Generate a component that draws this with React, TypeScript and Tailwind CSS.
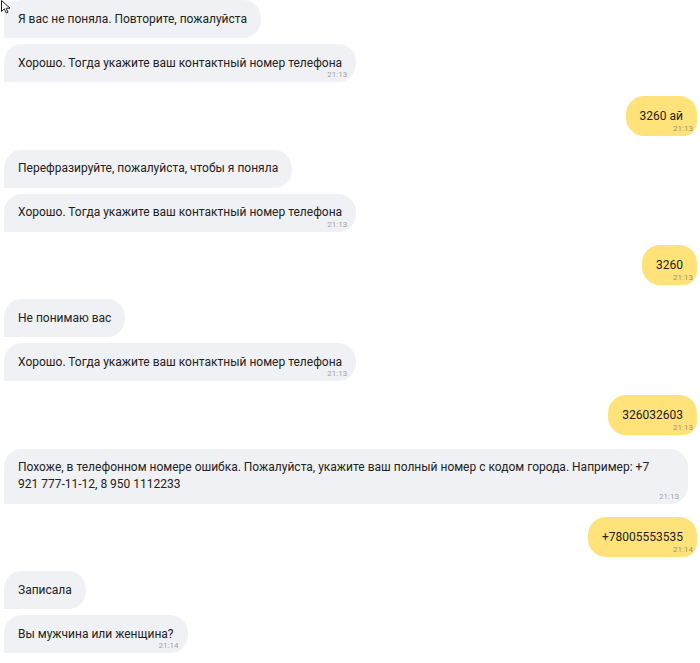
import React from "react";

type Msg = {
  from: "bot" | "user";
  text: string;
  time?: string;
  long?: boolean;
};

const messages: Msg[] = [
  { from: "bot", text: "Я вас не поняла. Повторите, пожалуйста" },
  { from: "bot", text: "Хорошо. Тогда укажите ваш контактный номер телефона", time: "21:13" },
  { from: "user", text: "3260 ай", time: "21:13" },
  { from: "bot", text: "Перефразируйте, пожалуйста, чтобы я поняла" },
  { from: "bot", text: "Хорошо. Тогда укажите ваш контактный номер телефона", time: "21:13" },
  { from: "user", text: "3260", time: "21:13" },
  { from: "bot", text: "Не понимаю вас" },
  { from: "bot", text: "Хорошо. Тогда укажите ваш контактный номер телефона", time: "21:13" },
  { from: "user", text: "326032603", time: "21:13" },
  {
    from: "bot",
    text: "Похоже, в телефонном номере ошибка. Пожалуйста, укажите ваш полный номер с кодом города. Например: +7 921 777-11-12, 8 950 1112233",
    time: "21:13",
    long: true,
  },
  { from: "user", text: "+78005553535", time: "21:14" },
  { from: "bot", text: "Записала" },
  { from: "bot", text: "Вы мужчина или женщина?", time: "21:14" },
];

function Cursor() {
  return (
    <svg
      className="absolute left-0 top-0"
      width="13"
      height="14"
      viewBox="0 0 13 14"
    >
      <path
        d="M1.5 0.5 L1.5 11.5 L4.3 8.8 L6.3 13 L8 12.2 L6.1 8.2 L10 8.2 Z"
        fill="#fff"
        stroke="#222"
        strokeWidth="1"
        strokeLinejoin="round"
      />
    </svg>
  );
}

function Bubble({ msg }: { msg: Msg }) {
  if (msg.from === "bot") {
    return (
      <div className="flex justify-start pl-1">
        <div
          className={`relative max-w-[684px] rounded-[18px] rounded-bl-none bg-[#f0f1f4] py-[10.5px] pl-[14px] text-[12px] leading-[17px] text-[#222] ${
            msg.long ? "pr-[30px]" : "pr-[14px]"
          }`}
        >
          {msg.text}
          {msg.time && (
            <span className="absolute bottom-[3px] right-[9px] text-[8px] leading-[8px] text-[#a3a3a3]">
              {msg.time}
            </span>
          )}
        </div>
      </div>
    );
  }
  return (
    <div className="flex justify-end pr-[3px]">
      <div className="relative rounded-[18px] rounded-br-[14px] bg-[#ffe27a] px-[14px] py-[12px] text-[12px] leading-[16px] text-[#222]">
        {msg.text}
        {msg.time && (
          <span className="absolute bottom-[3px] right-[4px] text-[8px] leading-[8px] text-[#a39460]">
            {msg.time}
          </span>
        )}
      </div>
    </div>
  );
}

export default function App() {
  return (
    <div
      className="relative h-[663px] w-[700px] overflow-hidden bg-white"
      style={{ fontFamily: 'Roboto, "Noto Sans", sans-serif' }}
    >
      <div className="flex flex-col">
        {messages.map((m, i) => {
          const prev = messages[i - 1];
          const mt = !prev ? "mt-0" : prev.from === m.from ? "mt-[6px]" : "mt-[13.75px]";
          return (
            <div key={i} className={mt}>
              <Bubble msg={m} />
            </div>
          );
        })}
      </div>
      <Cursor />
    </div>
  );
}
